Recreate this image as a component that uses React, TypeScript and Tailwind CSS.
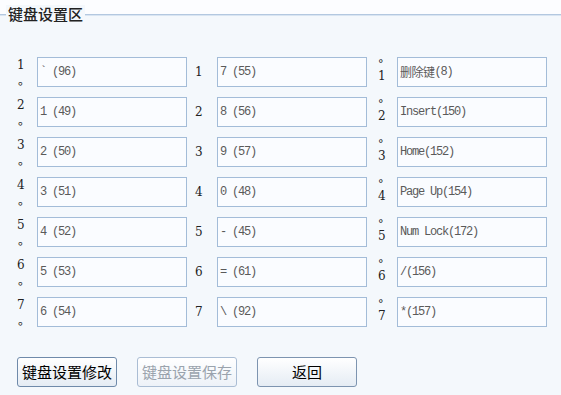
import React from "react"

const cjk = "'Noto Sans CJK SC', 'Liberation Sans', sans-serif"
const mono = "'Liberation Mono', 'Noto Sans CJK SC', monospace"

const col1 = ["` (96)", "1 (49)", "2 (50)", "3 (51)", "4 (52)", "5 (53)", "6 (54)"]
const col2 = ["7 (55)", "8 (56)", "9 (57)", "0 (48)", "- (45)", "= (61)", "\\ (92)"]
const col3 = ["删除键(8)", "Insert(150)", "Home(152)", "Page Up(154)", "Num Lock(172)", "/(156)", "*(157)"]

function KeyBox({ value }: { value: string }) {
  const cjkPart = value.match(/^[\u4e00-\u9fff]+/)?.[0] ?? ""
  const rest = value.slice(cjkPart.length)
  return (
    <div className="w-[150px] h-[30px] border border-[#a3bcd8] bg-[#fafcff] flex items-center pl-[2px] text-[#5a5a5a]">
      {cjkPart && (
        <span className="text-[12px] tracking-[-0.5px]" style={{ fontFamily: cjk }}>
          {cjkPart}
        </span>
      )}
      <span className="text-[12px] tracking-[-1.2px] whitespace-pre" style={{ fontFamily: mono }}>
        {rest}
      </span>
    </div>
  )
}

export default function App() {
  return (
    <div className="w-[561px] h-[395px] bg-[#f4f8fc] overflow-hidden text-[#222]" style={{ fontFamily: cjk }}>
      <div className="h-[14px] bg-[#fcfdff]" />
      <div className="relative h-[2px]">
        <div className="absolute left-0 right-0 top-0 h-[1px] bg-[#b3c8e0]" />
        <div className="absolute left-0 right-0 top-[1px] h-[1px] bg-[#d9e5f2]" />
        <div className="absolute left-[6px] top-[-9px] px-[2px] bg-[#f4f8fc] text-[15px] leading-[18px] font-medium">
          键盘设置区
        </div>
      </div>

      <div className="pl-[17px] pt-[41px] grid grid-cols-[20px_150px_30px_150px_30px_150px] auto-rows-[30px] gap-y-[10px]">
        {col1.map((v, i) => (
          <React.Fragment key={i}>
            <div className="flex flex-col items-start text-[12px] pt-[2px]">
              <span className="leading-[13px]" style={{ fontFamily: "'DejaVu Serif', serif" }}>{i + 1}</span>
              <span className="leading-[13px] pl-[1px] mt-[1px]">。</span>
            </div>
            <KeyBox value={v} />
            <div className="flex items-center pl-[8px] text-[12px]" style={{ fontFamily: "'DejaVu Serif', serif" }}>
              {i + 1}
            </div>
            <KeyBox value={col2[i]} />
            <div className="flex flex-col items-start pl-[11px] pt-[1px]">
              <span className="text-[11px] leading-[11px]" style={{ fontFamily: "'DejaVu Sans', sans-serif" }}>°</span>
              <span className="text-[12px] leading-[14px]" style={{ fontFamily: "'DejaVu Serif', serif" }}>{i + 1}</span>
            </div>
            <KeyBox value={col3[i]} />
          </React.Fragment>
        ))}
      </div>

      <div className="pl-[17px] pt-[30px] flex gap-[20px]">
        <button className="w-[100px] h-[30px] rounded-[3px] border border-[#6f8aaa] bg-gradient-to-b from-white to-[#e5ecf4] text-[15px] text-black">
          键盘设置修改
        </button>
        <button className="w-[100px] h-[30px] rounded-[3px] border border-[#aabdd4] bg-gradient-to-b from-white to-[#edf2f8] text-[15px] text-[#9aa3ad]">
          键盘设置保存
        </button>
        <button className="w-[100px] h-[30px] rounded-[3px] border border-[#7d94b0] bg-gradient-to-b from-white to-[#e5ecf4] text-[15px] text-black">
          返回
        </button>
      </div>
    </div>
  )
}
